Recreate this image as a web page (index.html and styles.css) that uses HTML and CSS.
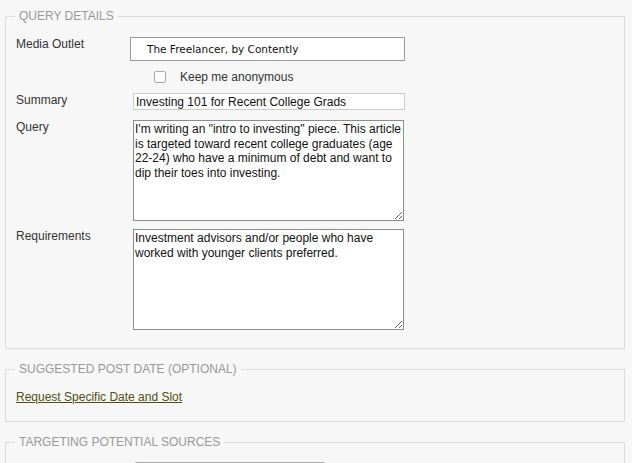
FILE: index.html
```html
<!DOCTYPE html>
<html lang="en">
<head>
<meta charset="utf-8">
<title>Query</title>
<link rel="stylesheet" href="styles.css">
</head>
<body>
<div class="page">
  <fieldset class="box box-query">
    <legend>Query Details</legend>
    <div class="row row-outlet">
      <span class="label">Media Outlet</span>
      <div class="outlet">The Freelancer, by Contently</div>
    </div>
    <div class="row row-anon">
      <span class="label"></span>
      <label class="anon"><span class="check"></span><span>Keep me anonymous</span></label>
    </div>
    <div class="row row-summary">
      <span class="label">Summary</span>
      <input class="summary" type="text" value="Investing 101 for Recent College Grads">
    </div>
    <div class="row row-query">
      <span class="label">Query</span>
      <textarea class="area">I'm writing an "intro to investing" piece. This article is targeted toward recent college graduates (age 22-24) who have a minimum of debt and want to dip their toes into investing.</textarea>
    </div>
    <div class="row row-req">
      <span class="label">Requirements</span>
      <textarea class="area">Investment advisors and/or people who have worked with younger clients preferred.</textarea>
    </div>
  </fieldset>

  <fieldset class="box box-date">
    <legend>Suggested Post Date (optional)</legend>
    <a class="date-link" href="#">Request Specific Date and Slot</a>
  </fieldset>

  <fieldset class="box box-target">
    <legend>Targeting Potential Sources</legend>
    <div class="row row-target">
      <span class="label"></span>
      <div class="select"></div>
    </div>
  </fieldset>
</div>
</body>
</html>
```
FILE: styles.css
```css
html, body {
  margin: 0;
  padding: 0;
  background: #f7f7f7;
}
body {
  font-family: "Liberation Sans", Arial, sans-serif;
  font-size: 12px;
  color: #333;
  overflow: hidden;
}
.page {
  padding: 9px 7px 0 5px;
}
.box {
  margin: 0 0 13px;
  padding: 0 10px 0 10px;
  border: 1px solid #dcdcdc;
  min-width: 0;
}
.box legend {
  margin-left: -1px;
  padding: 0 4px;
  font-size: 12px;
  line-height: 14px;
  color: #999;
  text-transform: uppercase;
}
.row {
  display: grid;
  grid-template-columns: 117px 272px;
  align-items: start;
}
.label {
  line-height: 14px;
  color: #333;
}
.row-outlet {
  margin-top: 14px;
}
.outlet {
  margin-left: -3px;
  height: 22px;
  width: 257px;
  border: 1px solid #999;
  background: #fff;
  font-family: "DejaVu Sans", Verdana, sans-serif;
  font-size: 10.5px;
  line-height: 22px;
  padding-left: 16px;
  box-sizing: content-box;
  color: #111;
}
.row-anon {
  height: 32px;
  align-items: center;
}
.anon {
  display: flex;
  align-items: center;
  gap: 14px;
  padding-left: 21px;
  color: #333;
  margin-top: -1px;
}
.check {
  width: 10px;
  height: 10px;
  border: 1px solid #aaa;
  border-radius: 2px;
  background: #fff;
}
.summary {
  margin: 0;
  width: 272px;
  height: 17px;
  box-sizing: border-box;
  border: 1px solid #ccc;
  padding: 0 2px;
  font-family: "Liberation Sans", Arial, sans-serif;
  font-size: 12px;
  color: #111;
  background: #fff;
  outline: none;
}
.row-query {
  margin-top: 10px;
}
.row-req {
  margin-top: 8px;
}
.area {
  margin: 0;
  width: 271px;
  height: 101px;
  box-sizing: border-box;
  border: 1px solid #8c8c8c;
  padding: 1px 1px;
  font-family: "Liberation Sans", Arial, sans-serif;
  font-size: 12px;
  line-height: 14.6px;
  color: #111;
  background: #fff;
  overflow: hidden;
}
.box-query {
  padding-bottom: 18px;
}
.box-date {
  padding-bottom: 17px;
}
.date-link {
  display: block;
  margin-top: 14px;
  width: max-content;
  color: #4f4f10;
  text-decoration: underline;
  line-height: 14px;
}
.row-target {
  margin-top: 13px;
}
.select {
  width: 192px;
  height: 20px;
  border: 1px solid #aaa;
  border-radius: 4px;
  background: #fff;
}
```
